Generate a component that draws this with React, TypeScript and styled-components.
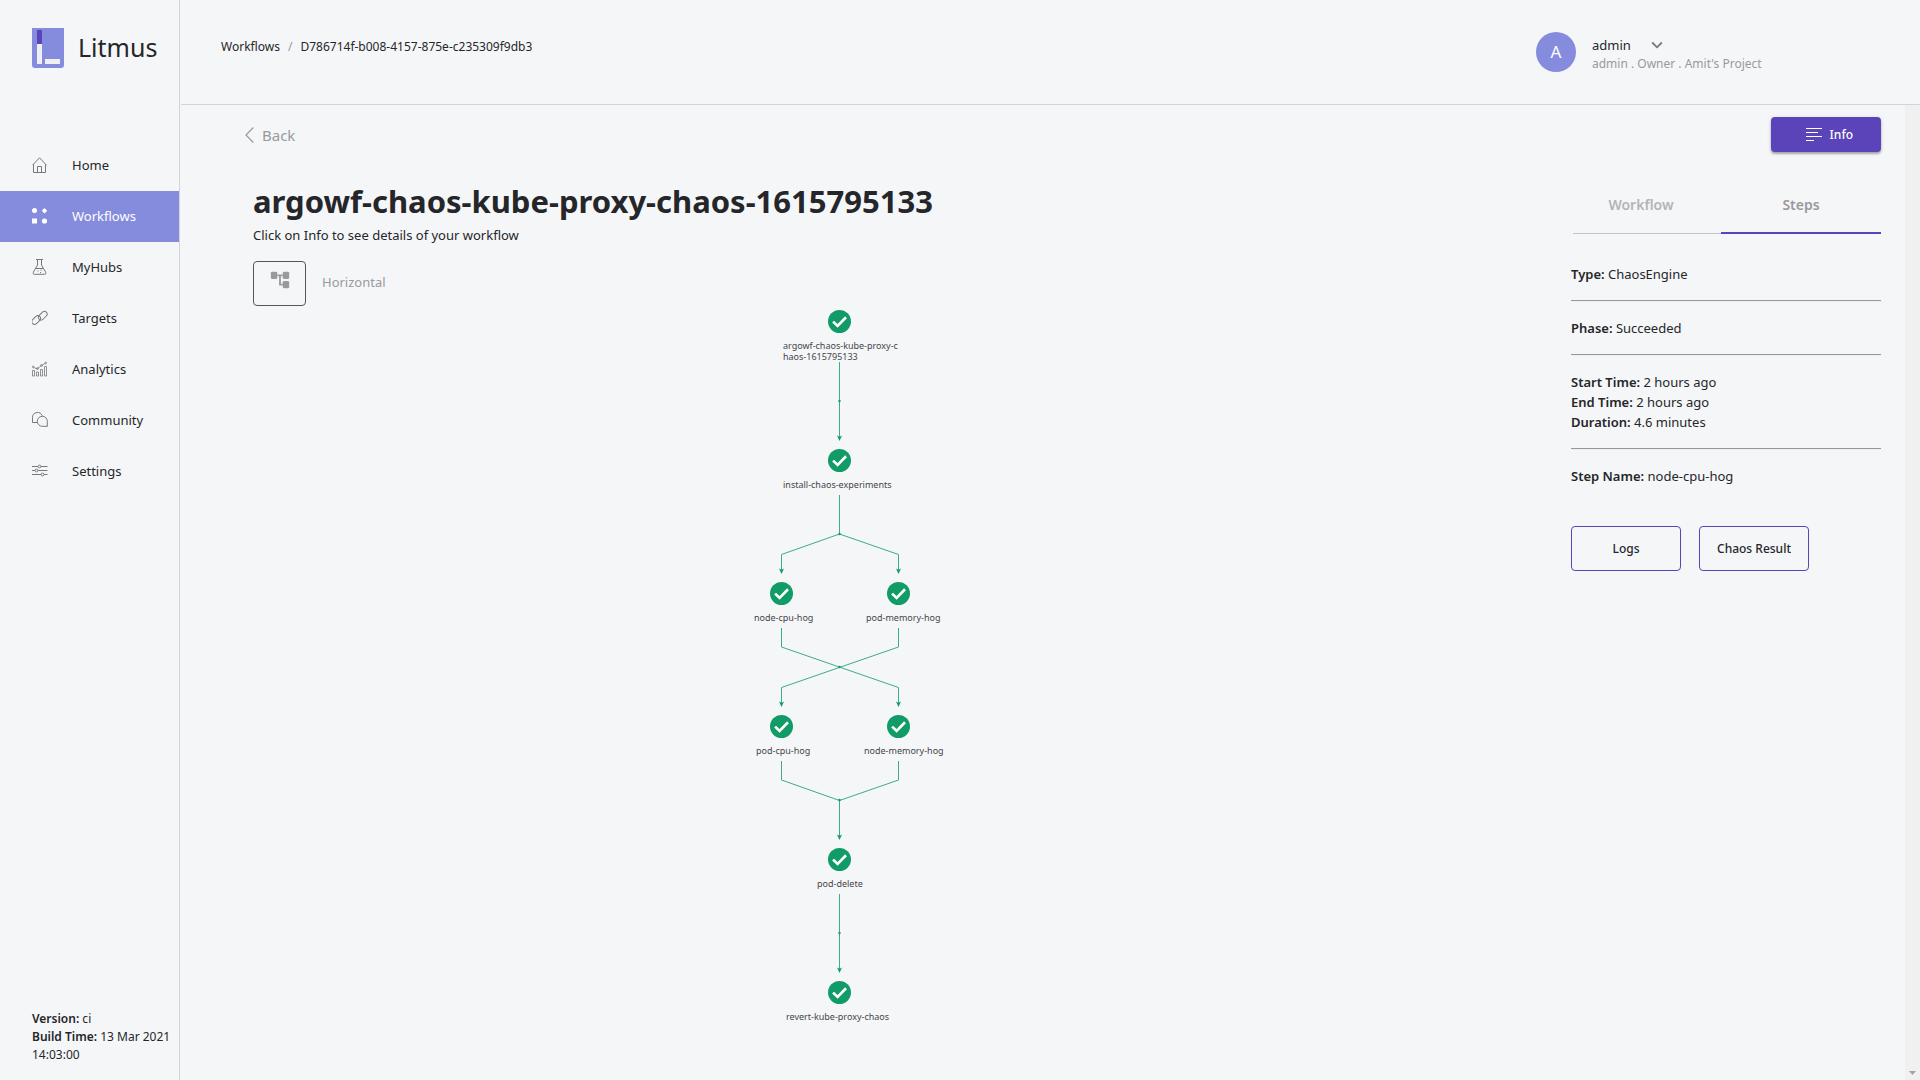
import React from "react";
import styled, { createGlobalStyle, css } from "styled-components";

const color = {
  page: "#f5f6f8",
  text: "#25262a",
  muted: "#999a9c",
  faint: "#b3b4b6",
  line: "#d3d4d7",
  rule: "#97989a",
  lilac: "#858cdd",
  purple: "#5b44ba",
  green: "#109b67",
};

const GlobalStyle = createGlobalStyle`
  *, *::before, *::after { box-sizing: border-box; }
  body {
    margin: 0;
    background: ${color.page};
    color: ${color.text};
    font-family: "Noto Sans", "Open Sans", sans-serif;
    font-size: 13px;
    line-height: 20px;
  }
  button { font: inherit; color: inherit; cursor: pointer; }
  a { color: inherit; text-decoration: none; }
`;

const Shell = styled.div`
  display: flex;
  gap: 1px;
  min-height: 100vh;
`;

/* ---------- Sidebar ---------- */

const Sidebar = styled.aside`
  flex: none;
  display: flex;
  flex-direction: column;
  width: 180px;
  border-right: 1px solid ${color.line};
`;

const Brand = styled.a`
  display: flex;
  align-items: center;
  gap: 14px;
  height: 140px;
  padding: 0 0 44px 32px;
`;

const BrandName = styled.span`
  padding-bottom: 2px;
  font-size: 25px;
  line-height: 32px;
`;

const Nav = styled.nav`
  display: flex;
  flex-direction: column;
`;

const NavItem = styled.a<{ $active?: boolean }>`
  display: flex;
  align-items: center;
  gap: 24px;
  height: 51px;
  padding: 0 0 2px 32px;
  svg {
    flex: none;
    color: #77787b;
  }
  ${(p) =>
    p.$active &&
    css`
      background: ${color.lilac};
      color: #fff;
      svg {
        color: #fff;
      }
    `}
`;

const BuildInfo = styled.p`
  margin: auto 0 16px 32px;
  font-size: 12px;
  line-height: 18px;
  b {
    font-weight: 600;
  }
`;

/* ---------- Header ---------- */

const Main = styled.div`
  flex: 1;
  min-width: 0;
  display: flex;
  flex-direction: column;
`;

const Header = styled.header`
  display: flex;
  justify-content: space-between;
  height: 105px;
  padding-left: 40px;
  border-bottom: 1px solid ${color.line};
`;

const Breadcrumb = styled.nav`
  display: flex;
  gap: 8px;
  padding-top: 37px;
  font-size: 12px;
`;

const Slash = styled.span`
  color: ${color.muted};
`;

const User = styled.div`
  display: flex;
  gap: 16px;
  width: 384px;
  padding-top: 32px;
`;

const Avatar = styled.div`
  display: flex;
  align-items: center;
  justify-content: center;
  width: 40px;
  height: 40px;
  border-radius: 50%;
  background: ${color.lilac};
  color: #fff;
  font-size: 17px;
`;

const UserText = styled.div`
  padding-top: 3px;
`;

const UserName = styled.button`
  display: flex;
  align-items: center;
  gap: 20px;
  padding: 0;
  border: 0;
  background: none;
  svg {
    color: #77787b;
  }
`;

const UserRole = styled.div`
  color: ${color.muted};
  font-size: 12px;
  line-height: 18px;
`;

/* ---------- Content ---------- */

const Body = styled.div`
  flex: 1;
  display: flex;
`;

const Page = styled.main`
  flex: 1;
  min-width: 0;
  padding: 12px 24px 40px 0;
`;

const TopRow = styled.div`
  display: flex;
  align-items: center;
  justify-content: space-between;
  padding-left: 64px;
`;

const Back = styled.button`
  display: flex;
  align-items: center;
  gap: 8px;
  padding: 0;
  border: 0;
  background: none;
  color: ${color.muted};
  font-size: 15px;
`;

const InfoButton = styled.button`
  display: flex;
  align-items: center;
  justify-content: flex-end;
  gap: 8px;
  width: 110px;
  height: 35px;
  padding: 0 28px 0 0;
  border: 0;
  border-radius: 4px;
  background: ${color.purple};
  color: #fff;
  font-size: 12px;
  font-weight: 500;
  box-shadow: 0 2px 2px rgba(0, 0, 0, 0.25), 0 1px 4px rgba(0, 0, 0, 0.15);
`;

const Columns = styled.div`
  display: flex;
  gap: 73px;
`;

const Workflow = styled.section`
  flex: 1;
  min-width: 0;
  padding-top: 27px;
`;

const Intro = styled.div`
  padding-left: 72px;
`;

const Title = styled.h1`
  margin: 0 0 2px;
  font-size: 31px;
  line-height: 44px;
  font-weight: 700;
`;

const Subtitle = styled.p`
  margin: 0 0 16px;
`;

const LayoutSwitch = styled.div`
  display: flex;
  align-items: center;
  gap: 16px;
  color: ${color.muted};
`;

const LayoutName = styled.span`
  padding-bottom: 4px;
`;

const LayoutButton = styled.button`
  display: flex;
  justify-content: center;
  width: 53px;
  height: 45px;
  padding: 7px 0 0;
  border: 1px solid #55565a;
  border-radius: 4px;
  background: none;
  color: ${color.muted};
`;

/* ---------- Details ---------- */

const Details = styled.aside`
  flex: none;
  width: 310px;
  padding-top: 24px;
`;

const Tabs = styled.div`
  display: flex;
  margin: 0 0 30px 2px;
`;

const Tab = styled.button<{ $selected?: boolean }>`
  flex: ${(p) => (p.$selected ? "0 0 160px" : "1")};
  height: 58px;
  padding: 0 ${(p) => (p.$selected ? 0 : 12)}px 0 0;
  border: 0;
  background: none;
  font-size: 14px;
  font-weight: 600;
  color: ${(p) => (p.$selected ? color.muted : color.faint)};
  box-shadow: inset 0 ${(p) => (p.$selected ? "-2px" : "-1px")} 0
    ${(p) => (p.$selected ? color.purple : "#c4c5c8")};
`;

const Fact = styled.p`
  margin: 0;
  b {
    font-weight: 600;
  }
`;

const Rule = styled.hr`
  margin: 16px 0;
  border: 0;
  border-top: 1px solid ${color.rule};
  border-bottom: 1px solid #eeeff1;
`;

const Actions = styled.div`
  display: flex;
  gap: 18px;
  margin-top: 40px;
`;

const OutlineButton = styled.button`
  width: 110px;
  height: 45px;
  padding: 0;
  border: 1px solid ${color.purple};
  border-radius: 4px;
  background: none;
  font-size: 12px;
  font-weight: 500;
`;

const ScrollTrack = styled.div`
  flex: none;
  display: flex;
  align-items: flex-end;
  justify-content: center;
  width: 15px;
  padding-bottom: 5px;
  background: #f0f0f0;
  color: #a3a3a3;
`;

/* ---------- Graph ---------- */

const Canvas = styled.div`
  position: relative;
  width: 241px;
  height: 720px;
  margin: 0 auto;
`;

const Edges = styled.svg`
  display: block;
  color: ${color.green};
`;

const Mark = styled.div<{ $x: number; $y: number }>`
  position: absolute;
  left: ${(p) => p.$x - 11}px;
  top: ${(p) => p.$y - 11}px;
  width: 23px;
  height: 23px;
`;

const Label = styled.div<{ $x: number; $y: number }>`
  position: absolute;
  left: ${(p) => p.$x}px;
  top: ${(p) => p.$y + 19}px;
  width: 118px;
  word-break: break-all;
  font-size: 9px;
  line-height: 11px;
  color: #45464a;
`;

const nodes = [
  { name: "argowf-chaos-kube-proxy-chaos-1615795133", x: 120, y: 15, labelX: 64 },
  { name: "install-chaos-experiments", x: 120, y: 154, labelX: 64 },
  { name: "node-cpu-hog", x: 62, y: 287, labelX: 35 },
  { name: "pod-memory-hog", x: 179, y: 287, labelX: 147 },
  { name: "pod-cpu-hog", x: 62, y: 420, labelX: 37 },
  { name: "node-memory-hog", x: 179, y: 420, labelX: 145 },
  { name: "pod-delete", x: 120, y: 553, labelX: 98 },
  { name: "revert-kube-proxy-chaos", x: 120, y: 686, labelX: 67 },
];

const edges = [
  "M120.5 56V132",
  "M120.5 189V228L62.500 248.500V266",
  "M120.5 228L179.500 248.500V266",
  "M62.500 322V341L179.500 381.500V399",
  "M179.500 322V341L62.500 381.500V399",
  "M62.500 455V474L120.500 494.500V532",
  "M179.500 455V474L120.500 494.500",
  "M120.5 588V665",
];

const arrows = [
  [120.5, 135],
  [62.5, 268],
  [179.5, 268],
  [62.5, 401],
  [179.5, 401],
  [120.5, 534],
  [120.5, 667],
];

const joints = [95, 228, 361, 494, 627];

const CheckMark = () => (
  <svg width="23" height="23" viewBox="0 0 23 23" display="block" aria-hidden="true">
    <circle cx="11.500" cy="11.500" r="11.500" fill={color.green} />
    <path d="M6 12.500L9.600 15.900L17.100 8.200" fill="none" stroke="#fff" strokeWidth="2.600" strokeLinecap="square" />
  </svg>
);

const Graph = () => (
  <Canvas>
    <Edges width="241" height="720" viewBox="0 0 241 720" aria-hidden="true">
      <g fill="none" stroke="currentColor" strokeWidth="1" opacity="0.8">
        {edges.map((d) => (
          <path key={d} d={d} />
        ))}
      </g>
      <g fill="currentColor">
        {arrows.map(([x, y]) => (
          <path key={`${x}-${y}`} d={`M${x} ${y}l-2.500 -5.500l2.500 1.200l2.500 -1.200z`} />
        ))}
        {joints.map((y) => (
          <circle key={y} cx="120.500" cy={y} r="1.200" />
        ))}
      </g>
    </Edges>
    {nodes.map((n) => (
      <React.Fragment key={n.name}>
        <Mark $x={n.x} $y={n.y}>
          <CheckMark />
        </Mark>
        <Label $x={n.labelX} $y={n.y}>
          {n.name}
        </Label>
      </React.Fragment>
    ))}
  </Canvas>
);

/* ---------- Icons ---------- */

const Icon = ({ children }: { children: React.ReactNode }) => (
  <svg width="16" height="16" viewBox="0 0 16 16" fill="none" stroke="currentColor" strokeWidth="1" aria-hidden="true">
    {children}
  </svg>
);

const HomeIcon = () => (
  <Icon>
    <path d="M0.500 8.200L7.500 0.800L14.500 8.200M1.500 7.300V15.500H13.500V7.300M5.500 15.500V9.500H9.500V15.500" />
  </Icon>
);

const WorkflowsIcon = () => (
  <Icon>
    <g fill="currentColor" stroke="none">
      <circle cx="2.500" cy="2.500" r="2.500" />
      <path d="M12.500 0L15.200 2.700L12.500 5.400L9.800 2.700Z" />
      <rect x="0" y="10.500" width="5" height="5" />
      <circle cx="12.500" cy="13" r="2.600" />
    </g>
  </Icon>
);

const HubsIcon = () => (
  <Icon>
    <path d="M4 0.500H11M5.500 0.500V6L1.300 13.300Q0.700 15.300 2.300 15.300H12.700Q14.300 15.300 13.700 13.300L9.500 6V0.500M3.700 9.500H11.300" />
    <path d="M5.500 12h1M8.500 11.200h1M8 13.500h1" />
  </Icon>
);

const TargetsIcon = () => (
  <Icon>
    <rect x="-0.800" y="7.300" width="10" height="5.400" rx="2.700" transform="rotate(-45 4.200 10)" />
    <rect x="5.800" y="3" width="10" height="5.400" rx="2.700" transform="rotate(-45 10.800 5.700)" />
  </Icon>
);

const AnalyticsIcon = () => (
  <Icon>
    <g strokeWidth="0.800">
      <path d="M0.500 15V9.500H2.500V15ZM4.500 15V11H6.500V15ZM8.500 15V8.500H10.500V15ZM12.500 15V5.500H14.500V15Z" />
      <path d="M2 6.500L5 8L9.500 4.500L13 2.500" />
      <circle cx="1.300" cy="6" r="0.900" />
      <circle cx="5.500" cy="7.500" r="0.900" />
      <circle cx="9.500" cy="4.500" r="0.900" />
      <circle cx="13.700" cy="2" r="0.900" />
    </g>
  </Icon>
);

const CommunityIcon = () => (
  <Icon>
    <path d="M5 10.500H0.500V5.500A5 5 0 0 1 10.200 3.800" />
    <path d="M15.300 14.500V9.300A5 5 0 1 0 10.300 14.300H15.300" />
  </Icon>
);

const SettingsIcon = () => (
  <Icon>
    <path d="M0 3.500H6M9 3.500H15.500M0 7.500H3M6 7.500H15.500M0 11.500H9M12 11.500H15.500" />
    <circle cx="7.500" cy="3.500" r="1.400" />
    <circle cx="4.500" cy="7.500" r="1.400" />
    <circle cx="10.500" cy="11.500" r="1.400" />
  </Icon>
);

const Logo = () => (
  <svg width="32" height="40" viewBox="0 0 32 40" aria-hidden="true">
    <path d="M0 0H32V37Q32 40 29 40H3Q0 40 0 37Z" fill={color.lilac} />
    <rect x="5" y="2" width="5" height="14" fill={color.purple} />
    <rect x="5" y="16" width="5" height="20" fill="#f0f0f4" />
    <rect x="13" y="31" width="15" height="5" fill="#f0f0f4" />
  </svg>
);

const navItems = [
  { label: "Home", icon: <HomeIcon /> },
  { label: "Workflows", icon: <WorkflowsIcon />, active: true },
  { label: "MyHubs", icon: <HubsIcon /> },
  { label: "Targets", icon: <TargetsIcon /> },
  { label: "Analytics", icon: <AnalyticsIcon /> },
  { label: "Community", icon: <CommunityIcon /> },
  { label: "Settings", icon: <SettingsIcon /> },
];

export default function App() {
  return (
    <>
      <GlobalStyle />
      <Shell>
        <Sidebar>
          <Brand href="#home">
            <Logo />
            <BrandName>Litmus</BrandName>
          </Brand>
          <Nav>
            {navItems.map((item) => (
              <NavItem key={item.label} href={`#${item.label}`} $active={item.active}>
                {item.icon}
                {item.label}
              </NavItem>
            ))}
          </Nav>
          <BuildInfo>
            <b>Version:</b> ci
            <br />
            <b>Build Time:</b> <span>13 Mar 2021</span> <span>14:03:00</span>
          </BuildInfo>
        </Sidebar>

        <Main>
          <Header>
            <Breadcrumb>
              <a href="#workflows">Workflows</a>
              <Slash>/</Slash>
              <a href="#run">D786714f-b008-4157-875e-c235309f9db3</a>
            </Breadcrumb>
            <User>
              <Avatar>A</Avatar>
              <UserText>
                <UserName type="button">
                  admin
                  <svg width="12" height="8" viewBox="0 0 12 8" fill="none" stroke="currentColor" strokeWidth="1.800" aria-hidden="true">
                    <path d="M1.200 1.500L6 6.300L10.800 1.500" />
                  </svg>
                </UserName>
                <UserRole>admin . Owner . Amit's Project</UserRole>
              </UserText>
            </User>
          </Header>

          <Body>
            <Page>
              <TopRow>
                <Back type="button">
                  <svg width="9" height="16" viewBox="0 0 9 16" fill="none" stroke="currentColor" strokeWidth="1.200" aria-hidden="true">
                    <path d="M8.300 0.500L1 8L8.300 15.500" />
                  </svg>
                  Back
                </Back>
                <InfoButton type="button">
                  <svg width="16" height="16" viewBox="0 0 16 16" stroke="currentColor" aria-hidden="true">
                    <path d="M0 1.500H16M0 5.500H12M0 9.500H16M0 13.500H8" />
                  </svg>
                  Info
                </InfoButton>
              </TopRow>

              <Columns>
                <Workflow>
                  <Intro>
                    <Title>argowf-chaos-kube-proxy-chaos-1615795133</Title>
                    <Subtitle>Click on Info to see details of your workflow</Subtitle>
                    <LayoutSwitch>
                      <LayoutButton type="button" aria-label="Switch layout">
                        <svg width="22" height="22" viewBox="0 0 24 24" fill="currentColor" aria-hidden="true">
                          <rect x="2" y="3" width="7" height="8" rx="1.500" />
                          <rect x="15" y="3" width="7" height="8" rx="1.500" />
                          <rect x="15" y="13" width="7" height="8" rx="1.500" />
                          <path d="M9 6H15V8H13V16H15V18H11V8H9Z" />
                        </svg>
                      </LayoutButton>
                      <LayoutName>Horizontal</LayoutName>
                    </LayoutSwitch>
                  </Intro>
                  <Graph />
                </Workflow>

                <Details>
                  <Tabs role="tablist">
                    <Tab type="button" role="tab">
                      Workflow
                    </Tab>
                    <Tab type="button" role="tab" aria-selected="true" $selected>
                      Steps
                    </Tab>
                  </Tabs>
                  <Fact>
                    <b>Type:</b> ChaosEngine
                  </Fact>
                  <Rule />
                  <Fact>
                    <b>Phase:</b> Succeeded
                  </Fact>
                  <Rule />
                  <Fact>
                    <b>Start Time:</b> 2 hours ago
                  </Fact>
                  <Fact>
                    <b>End Time:</b> 2 hours ago
                  </Fact>
                  <Fact>
                    <b>Duration:</b> 4.6 minutes
                  </Fact>
                  <Rule />
                  <Fact>
                    <b>Step Name:</b> node-cpu-hog
                  </Fact>
                  <Actions>
                    <OutlineButton type="button">Logs</OutlineButton>
                    <OutlineButton type="button">Chaos Result</OutlineButton>
                  </Actions>
                </Details>
              </Columns>
            </Page>
            <ScrollTrack aria-hidden="true">
              <svg width="7" height="4" viewBox="0 0 7 4" fill="currentColor">
                <path d="M0 0H7L3.500 4Z" />
              </svg>
            </ScrollTrack>
          </Body>
        </Main>
      </Shell>
    </>
  );
}
